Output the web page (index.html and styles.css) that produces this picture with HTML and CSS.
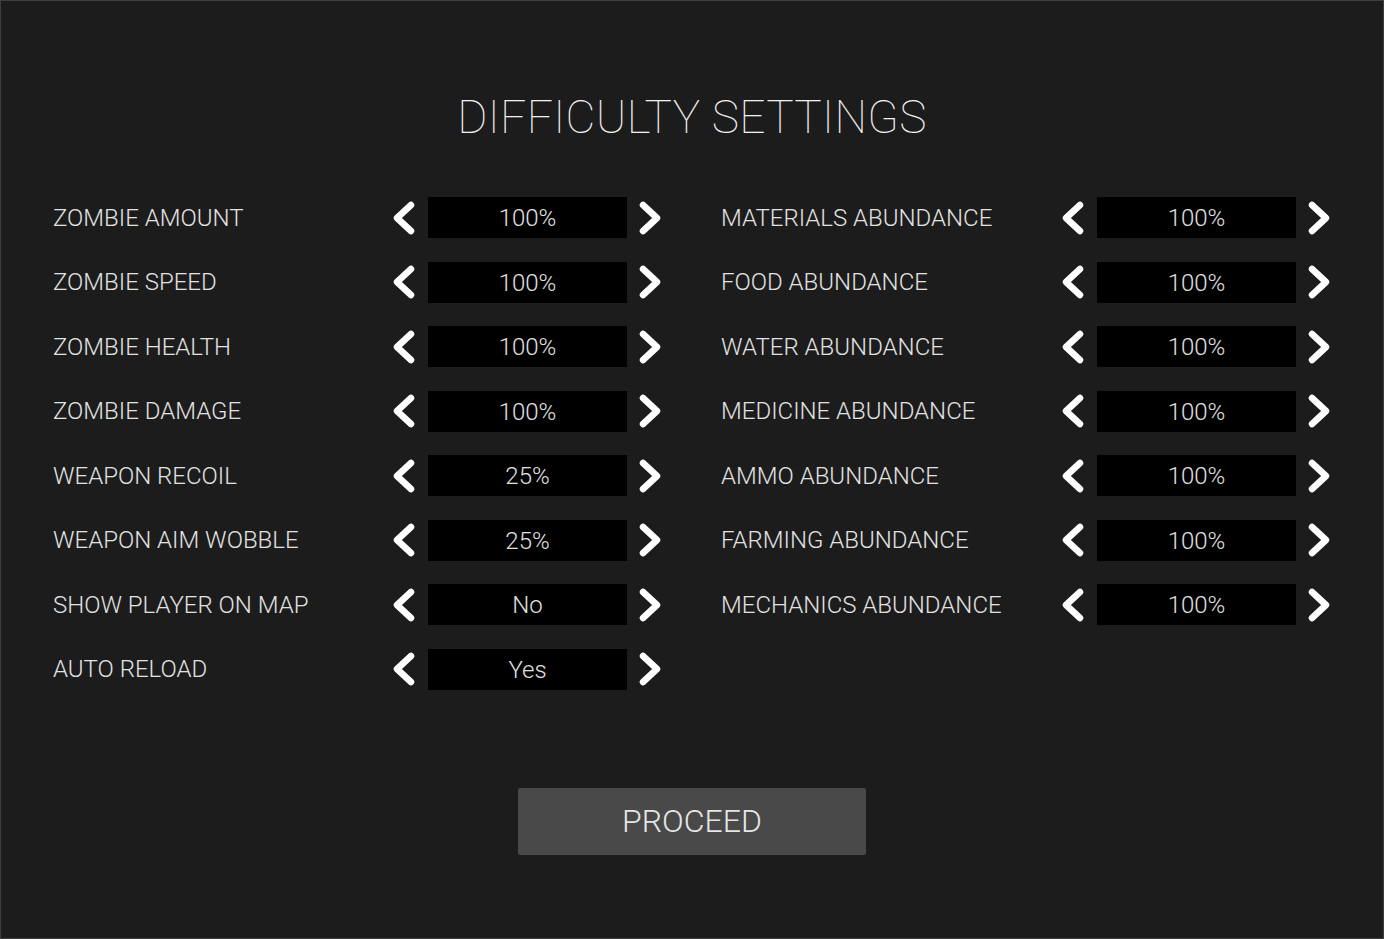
FILE: index.html
```html
<!DOCTYPE html>
<html lang="en">
<head>
    <meta charset="UTF-8">
    <meta name="viewport" content="width=device-width, initial-scale=1.0">
    <title>Difficulty Settings</title>
    <link rel="stylesheet" href="styles.css">
</head>
<body>
    <div class="screen">
        <h1 class="title">DIFFICULTY SETTINGS</h1>

        <div class="settings">
            <div class="column">
                <div class="setting"><span class="label">ZOMBIE AMOUNT</span><button class="arrow"><svg viewBox="0 0 24 34"><polyline points="19,4 5,17 19,30"/></svg></button><div class="value">100%</div><button class="arrow"><svg viewBox="0 0 24 34"><polyline points="5,4 19,17 5,30"/></svg></button></div>
                <div class="setting"><span class="label">ZOMBIE SPEED</span><button class="arrow"><svg viewBox="0 0 24 34"><polyline points="19,4 5,17 19,30"/></svg></button><div class="value">100%</div><button class="arrow"><svg viewBox="0 0 24 34"><polyline points="5,4 19,17 5,30"/></svg></button></div>
                <div class="setting"><span class="label">ZOMBIE HEALTH</span><button class="arrow"><svg viewBox="0 0 24 34"><polyline points="19,4 5,17 19,30"/></svg></button><div class="value">100%</div><button class="arrow"><svg viewBox="0 0 24 34"><polyline points="5,4 19,17 5,30"/></svg></button></div>
                <div class="setting"><span class="label">ZOMBIE DAMAGE</span><button class="arrow"><svg viewBox="0 0 24 34"><polyline points="19,4 5,17 19,30"/></svg></button><div class="value">100%</div><button class="arrow"><svg viewBox="0 0 24 34"><polyline points="5,4 19,17 5,30"/></svg></button></div>
                <div class="setting"><span class="label">WEAPON RECOIL</span><button class="arrow"><svg viewBox="0 0 24 34"><polyline points="19,4 5,17 19,30"/></svg></button><div class="value">25%</div><button class="arrow"><svg viewBox="0 0 24 34"><polyline points="5,4 19,17 5,30"/></svg></button></div>
                <div class="setting"><span class="label">WEAPON AIM WOBBLE</span><button class="arrow"><svg viewBox="0 0 24 34"><polyline points="19,4 5,17 19,30"/></svg></button><div class="value">25%</div><button class="arrow"><svg viewBox="0 0 24 34"><polyline points="5,4 19,17 5,30"/></svg></button></div>
                <div class="setting"><span class="label">SHOW PLAYER ON MAP</span><button class="arrow"><svg viewBox="0 0 24 34"><polyline points="19,4 5,17 19,30"/></svg></button><div class="value">No</div><button class="arrow"><svg viewBox="0 0 24 34"><polyline points="5,4 19,17 5,30"/></svg></button></div>
                <div class="setting"><span class="label">AUTO RELOAD</span><button class="arrow"><svg viewBox="0 0 24 34"><polyline points="19,4 5,17 19,30"/></svg></button><div class="value">Yes</div><button class="arrow"><svg viewBox="0 0 24 34"><polyline points="5,4 19,17 5,30"/></svg></button></div>
            </div>
            <div class="column">
                <div class="setting"><span class="label">MATERIALS ABUNDANCE</span><button class="arrow"><svg viewBox="0 0 24 34"><polyline points="19,4 5,17 19,30"/></svg></button><div class="value">100%</div><button class="arrow"><svg viewBox="0 0 24 34"><polyline points="5,4 19,17 5,30"/></svg></button></div>
                <div class="setting"><span class="label">FOOD ABUNDANCE</span><button class="arrow"><svg viewBox="0 0 24 34"><polyline points="19,4 5,17 19,30"/></svg></button><div class="value">100%</div><button class="arrow"><svg viewBox="0 0 24 34"><polyline points="5,4 19,17 5,30"/></svg></button></div>
                <div class="setting"><span class="label">WATER ABUNDANCE</span><button class="arrow"><svg viewBox="0 0 24 34"><polyline points="19,4 5,17 19,30"/></svg></button><div class="value">100%</div><button class="arrow"><svg viewBox="0 0 24 34"><polyline points="5,4 19,17 5,30"/></svg></button></div>
                <div class="setting"><span class="label">MEDICINE ABUNDANCE</span><button class="arrow"><svg viewBox="0 0 24 34"><polyline points="19,4 5,17 19,30"/></svg></button><div class="value">100%</div><button class="arrow"><svg viewBox="0 0 24 34"><polyline points="5,4 19,17 5,30"/></svg></button></div>
                <div class="setting"><span class="label">AMMO ABUNDANCE</span><button class="arrow"><svg viewBox="0 0 24 34"><polyline points="19,4 5,17 19,30"/></svg></button><div class="value">100%</div><button class="arrow"><svg viewBox="0 0 24 34"><polyline points="5,4 19,17 5,30"/></svg></button></div>
                <div class="setting"><span class="label">FARMING ABUNDANCE</span><button class="arrow"><svg viewBox="0 0 24 34"><polyline points="19,4 5,17 19,30"/></svg></button><div class="value">100%</div><button class="arrow"><svg viewBox="0 0 24 34"><polyline points="5,4 19,17 5,30"/></svg></button></div>
                <div class="setting"><span class="label">MECHANICS ABUNDANCE</span><button class="arrow"><svg viewBox="0 0 24 34"><polyline points="19,4 5,17 19,30"/></svg></button><div class="value">100%</div><button class="arrow"><svg viewBox="0 0 24 34"><polyline points="5,4 19,17 5,30"/></svg></button></div>
            </div>
        </div>

        <div class="actions">
            <button class="proceed">PROCEED</button>
        </div>
    </div>
</body>
</html>
```

FILE: styles.css
```css
body, html {
    margin: 0;
    padding: 0;
    font-family: 'Roboto', 'Liberation Sans', sans-serif;
    background-color: #1c1c1c;
}
.screen {
    box-sizing: border-box;
    width: 1384px;
    height: 939px;
    border: 1px solid #3e3e3e;
    background-color: #1c1c1c;
    padding: 0 52px;
}
.title {
    margin: 86px 0 0;
    font-size: 46px;
    font-weight: 100;
    line-height: 60px;
    letter-spacing: 0.3px;
    color: #f2f2f2;
    text-align: center;
}
.settings {
    display: grid;
    grid-template-columns: 609px 610px;
    column-gap: 59px;
    margin-top: 50px;
}
.column {
    display: flex;
    flex-direction: column;
    gap: 23.5px;
}
.setting {
    display: flex;
    align-items: center;
    height: 41px;
}
.label {
    flex: 1;
    font-size: 24px;
    font-weight: 300;
    color: #e2e2e2;
    white-space: nowrap;
}
.arrow {
    width: 24px;
    height: 34px;
    padding: 0;
    border: none;
    background: none;
    cursor: pointer;
}
.arrow svg {
    display: block;
    width: 24px;
    height: 34px;
}
.arrow polyline {
    fill: none;
    stroke: #ffffff;
    stroke-width: 6.5;
    stroke-linecap: round;
    stroke-linejoin: round;
}
.value {
    width: 199px;
    height: 41px;
    margin: 0 11px 0 12px;
    background-color: #000;
    color: #e0e0e0;
    font-size: 24px;
    font-weight: 300;
    line-height: 42px;
    text-align: center;
}
.actions {
    display: flex;
    justify-content: center;
    margin-top: 98px;
}
.proceed {
    width: 348px;
    height: 67px;
    background-color: #494949;
    border: none;
    border-radius: 2px;
    color: #e6e6e6;
    font-family: 'Roboto', 'Liberation Sans', sans-serif;
    font-size: 32px;
    font-weight: 300;
    cursor: pointer;
}
```
